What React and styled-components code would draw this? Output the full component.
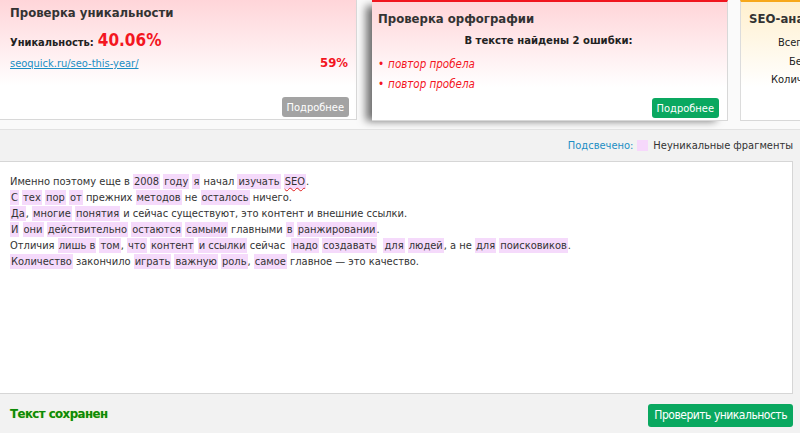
import React from 'react';
import styled, {createGlobalStyle} from 'styled-components';

const GlobalStyle = createGlobalStyle`
    html, body {
        margin: 0;
        padding: 0;
        background: #f2f2f2;
        overflow: hidden;
    }
    body {
        font-family: "DejaVu Sans Condensed", "DejaVu Sans", Verdana, sans-serif;
        color: #333;
    }
`;

const Page = styled.div`
    width: 800px;
    height: 433px;
    display: flex;
    flex-direction: column;
    background: #f2f2f2;
`;

const CardsRow = styled.div`
    display: flex;
    align-items: flex-start;
    height: 122px;
    overflow: hidden;
    background: #fafafa;
    border-bottom: 1px solid #e2e2e2;
    padding-bottom: 7px;
`;

const Card = styled.div`
    flex: 0 0 ${(p) => p.width}px;
    height: ${(p) => p.height}px;
    margin-left: ${(p) => p.offset || 0}px;
    box-sizing: border-box;
    display: flex;
    flex-direction: column;
    padding: ${(p) => p.padTop}px 8px 0 ${(p) => p.padLeft}px;
    background: linear-gradient(to bottom, ${(p) => p.tint} 0, #fff 72%);
    border-top: ${(p) => (p.accent ? `2px solid ${p.accent}` : 'none')};
    border-right: 1px solid #d8d8d8;
    border-left: ${(p) => (p.leftLine ? '1px solid #dcdcdc' : 'none')};
    border-bottom: 1px solid #d8d8d8;
    box-shadow: ${(p) => (p.raised ? '-9px 3px 8px -3px rgba(0, 0, 0, 0.55)' : 'none')};
    position: relative;
    z-index: ${(p) => (p.raised ? 2 : 1)};
`;

const CardTitle = styled.div`
    font-size: 13px;
    font-weight: bold;
    color: #333;
    white-space: nowrap;
    margin-bottom: ${(p) => p.gap}px;
`;

const ScoreLine = styled.div`
    font-size: 11px;
    font-weight: bold;
    color: #222;
    display: flex;
    align-items: baseline;
    gap: 4px;

    b {
        color: #f3161f;
        font-size: 17px;
    }
`;

const SourceRow = styled.div`
    display: flex;
    justify-content: space-between;
    align-items: baseline;
    margin-top: 5px;
    font-size: 11px;
`;

const SourceLink = styled.a`
    color: #1b8ec4;
    text-decoration: underline;
`;

const Percent = styled.span`
    color: #f3161f;
    font-weight: bold;
    font-size: 13px;
`;

const Spacer = styled.div`
    flex: 1;
`;

const MoreButton = styled.button`
    align-self: flex-end;
    margin-bottom: ${(p) => p.bottom}px;
    margin-right: ${(p) => p.right}px;
    height: 20px;
    padding: 0 5px;
    border: none;
    border-radius: 3px;
    color: #fff;
    background: ${(p) => p.color};
    font-family: inherit;
    font-size: 11px;
    cursor: pointer;
`;

const ErrorsHead = styled.div`
    text-align: center;
    font-size: 11.2px;
    font-weight: bold;
    color: #222;
    margin-bottom: 7px;
`;

const ErrorItem = styled.div`
    font-size: 11.5px;
    font-style: italic;
    color: #f3161f;
    line-height: 20px;

    &::before {
        content: "•";
        font-style: normal;
        margin-right: 4px;
    }
`;

const SeoLine = styled.div`
    font-size: 11px;
    color: #222;
    white-space: nowrap;
    padding-left: ${(p) => p.indent}px;
    line-height: 18.5px;
`;

const Legend = styled.div`
    display: flex;
    justify-content: flex-end;
    align-items: center;
    gap: 4px;
    height: 31px;
    padding-right: 7px;
    font-size: 11px;
    color: #333;
`;

const LegendLabel = styled.span`
    color: #1b8ec4;
`;

const Swatch = styled.span`
    width: 11px;
    height: 11px;
    background: #f6d8fb;
    margin-right: 1px;
`;

const Editor = styled.div`
    height: 233px;
    margin-right: 7px;
    box-sizing: border-box;
    background: #fff;
    border: 1px solid #d6d6d6;
    border-left: none;
    padding: 12px 10px;
    font-size: 11px;
    line-height: 16px;
    color: #333;
`;

const EditorLine = styled.div`
    white-space: pre;
`;

const Mark = styled.span`
    background: #f5dafb;
    padding: 1px 1px;
`;

const Typo = styled.span`
    text-decoration: underline wavy #e02020;
    text-decoration-thickness: 1px;
    text-underline-offset: 2px;
`;

const Footer = styled.div`
    flex: 1;
    display: flex;
    justify-content: space-between;
    align-items: center;
    padding: 0 7px 0 10px;
`;

const Saved = styled.span`
    font-family: "DejaVu Sans Condensed", "DejaVu Sans", sans-serif;
    font-weight: bold;
    font-size: 13px;
    letter-spacing: -0.5px;
    color: #0a8a0a;
    text-shadow: 0 0 1px rgba(200, 220, 0, 0.6);
`;

const CheckButton = styled.button`
    height: 23px;
    margin-top: 3px;
    padding: 0 6px;
    border: none;
    border-radius: 3px;
    background: #0aa860;
    color: #fff;
    font-family: "DejaVu Sans Condensed", "DejaVu Sans", sans-serif;
    font-size: 12px;
    letter-spacing: -0.5px;
    cursor: pointer;
`;

const lines = [
    [['Именно поэтому еще в '], ['2008', 1], [' '], ['году', 1], [' '], ['я', 1], [' начал '], ['изучать', 1], [' '], ['SEO', 2], ['.']],
    [['С', 1], [' '], ['тех', 1], [' '], ['пор', 1], [' '], ['от', 1], [' прежних '], ['методов', 1], [' не '], ['осталось', 1], [' ничего.']],
    [['Да', 1], [', '], ['многие', 1], [' '], ['понятия', 1], [' и сейчас существуют, это контент и внешние ссылки.']],
    [['И', 1], [' '], ['они', 1], [' '], ['действительно', 1], [' '], ['остаются', 1], [' '], ['самыми', 1], [' главными '], ['в', 1], [' '], ['ранжировании', 1], ['.']],
    [['Отличия '], ['лишь в', 1], [' '], ['том', 1], [', '], ['что', 1], [' '], ['контент', 1], [' '], ['и ссылки', 1], [' сейчас  '], ['надо', 1], [' '], ['создавать', 1], ['  '], ['для', 1], [' '], ['людей', 1], [', а не '], ['для', 1], [' '], ['поисковиков', 1], ['.']],
    [['Количество', 1], [' закончило '], ['играть', 1], [' '], ['важную', 1], [' '], ['роль', 1], [', '], ['самое', 1], [' главное — это качество.']],
];

function renderPart([text, kind], i) {
    if (kind === 1) return <Mark key={i}>{text}</Mark>;
    if (kind === 2) return <Mark key={i}><Typo>{text}</Typo></Mark>;
    return <React.Fragment key={i}>{text}</React.Fragment>;
}

export default function App() {
    return (
        <Page>
            <GlobalStyle/>
            <CardsRow>
                <Card width={357} height={120} padTop={5} padLeft={10} tint="#ffd5d9">
                    <CardTitle gap={10}>Проверка уникальности</CardTitle>
                    <ScoreLine>Уникальность: <b>40.06%</b></ScoreLine>
                    <SourceRow>
                        <SourceLink href="#">seoquick.ru/seo-this-year/</SourceLink>
                        <Percent>59%</Percent>
                    </SourceRow>
                    <Spacer/>
                    <MoreButton color="#a3a3a3" bottom={2} right={-1}>Подробнее</MoreButton>
                </Card>
                <Card width={356} height={121} offset={15} padTop={9} padLeft={6} tint="#ffd5d9" accent="#f0141e" raised>
                    <CardTitle gap={8}>Проверка орфографии</CardTitle>
                    <ErrorsHead>В тексте найдены 2 ошибки:</ErrorsHead>
                    <ErrorItem>повтор пробела</ErrorItem>
                    <ErrorItem>повтор пробела</ErrorItem>
                    <Spacer/>
                    <MoreButton color="#0aa860" bottom={2} right={0}>Подробнее</MoreButton>
                </Card>
                <Card width={300} height={121} offset={12} padTop={9} padLeft={8} tint="#fff0cf" accent="#f7a81b" leftLine>
                    <CardTitle gap={8}>SEO-анализ текста</CardTitle>
                    <SeoLine indent={29}>Всего символов</SeoLine>
                    <SeoLine indent={40}>Без пробелов</SeoLine>
                    <SeoLine indent={22}>Количество слов</SeoLine>
                </Card>
            </CardsRow>
            <Legend>
                <LegendLabel>Подсвечено:</LegendLabel>
                <Swatch/>
                <span>Неуникальные фрагменты</span>
            </Legend>
            <Editor>
                {lines.map((parts, i) => (
                    <EditorLine key={i}>{parts.map(renderPart)}</EditorLine>
                ))}
            </Editor>
            <Footer>
                <Saved>Текст сохранен</Saved>
                <CheckButton>Проверить уникальность</CheckButton>
            </Footer>
        </Page>
    );
}
